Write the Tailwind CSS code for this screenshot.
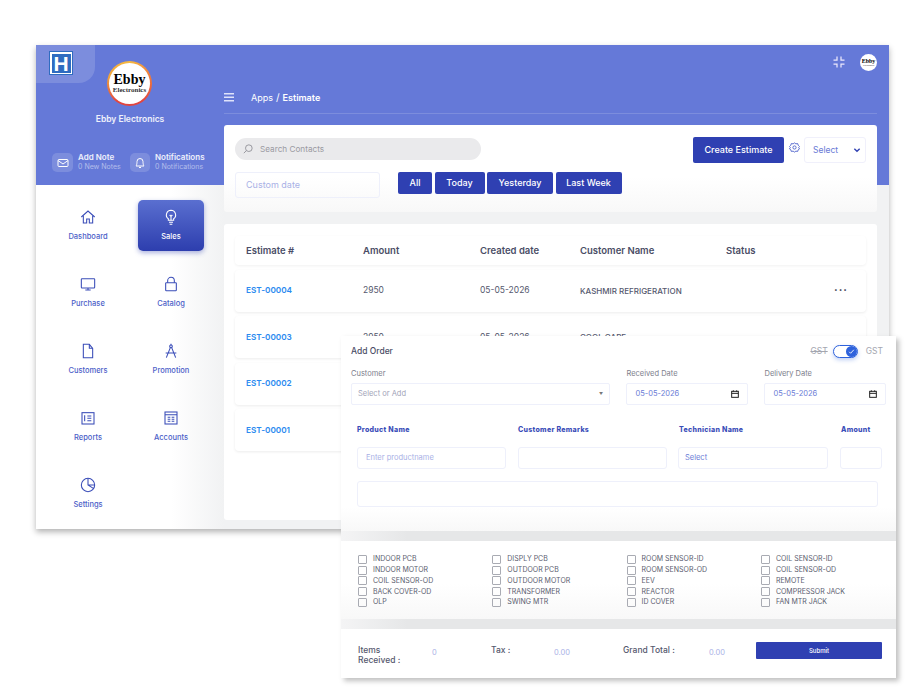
<!DOCTYPE html>
<html lang="en">
<head>
  <meta charset="UTF-8">
  <title>Estimate</title>
  <script src="https://cdn.jsdelivr.net/npm/@tailwindcss/browser@4"></script>
</head>
<body class="bg-white font-['Inter',sans-serif] text-[#3b3f5c]">
<div class="relative w-[920px] h-[700px] overflow-hidden bg-white">

  <!-- main app window -->
  <div class="absolute left-[36px] top-[45px] w-[853px] h-[484px] flex bg-[linear-gradient(#6579d8_140px,#f1f2f3_140px)] shadow-[0_3px_6px_rgba(0,0,0,0.3)]">

    <!-- sidebar -->
    <div class="w-[188px] shrink-0 flex flex-col">
      <div class="relative h-[140px] flex flex-col items-center">
        <div class="absolute left-0 top-0 w-[59px] h-[38px] rounded-br-[16px] bg-white/15 pl-[13px] pt-[6px]">
          <div class="w-[24px] h-[24px] bg-white p-[1.5px] border border-[#2f6cc0]">
            <div class="w-full h-full bg-[#2f6cc0] flex items-center justify-center">
              <span class="text-white font-bold text-[21px] leading-none font-['Liberation_Sans',sans-serif]">H</span>
            </div>
          </div>
        </div>
        <div class="mt-[16px] -ml-[1px] w-[45px] h-[45px] rounded-full bg-[conic-gradient(#f5b942,#ef7a3c,#e2453f,#e2453f,#f2a43a,#f5b942)] p-[2px]">
          <div class="w-full h-full rounded-full bg-white flex flex-col items-center justify-center font-['Liberation_Serif',serif] text-black">
            <span class="text-[14px] font-bold leading-[12px]">Ebby</span>
            <span class="text-[7px] leading-[8px] font-bold text-[#333]">Electronics</span>
          </div>
        </div>
        <div class="mt-[6px] text-[8.500px] font-semibold text-white/90 leading-[14px]">Ebby Electronics</div>
        <div class="mt-[27px] self-start pl-[16px] flex gap-[7px]">
          <div class="flex items-center gap-[5px] w-[71px]">
            <div class="w-[21px] h-[19px] rounded-[5px] bg-white/15 flex items-center justify-center shrink-0">
              <svg class="w-[12px] h-[12px]" viewBox="0 0 24 24" fill="none" stroke="white" stroke-width="2"><rect x="2" y="5" width="20" height="14" rx="2"/><path d="M2 7l10 7 10-7"/></svg>
            </div>
            <div class="leading-[10px] whitespace-nowrap -mt-[2px]">
              <div class="text-[8px] font-semibold text-white/90">Add Note</div>
              <div class="text-[7px] text-white/50">0 New Notes</div>
            </div>
          </div>
          <div class="flex items-center gap-[5px]">
            <div class="w-[20px] h-[19px] rounded-[5px] bg-white/15 flex items-center justify-center shrink-0">
              <svg class="w-[12px] h-[12px]" viewBox="0 0 24 24" fill="none" stroke="white" stroke-width="2"><path d="M18 9a6 6 0 0 0-12 0c0 7-2 9-2 9h16s-2-2-2-9"/><path d="M10 21h4"/></svg>
            </div>
            <div class="leading-[10px] whitespace-nowrap -mt-[2px]">
              <div class="text-[8px] font-semibold text-white/90">Notifications</div>
              <div class="text-[7px] text-white/50">0 Notifications</div>
            </div>
          </div>
        </div>
      </div>

      <div class="flex-1 bg-[linear-gradient(to_right,#ffffff_72%,#f1f2f3)] pt-[15px] pl-[19px]">
        <div class="grid grid-cols-[66px_66px] auto-rows-[51px] gap-x-[17px] gap-y-[16px] text-[7.500px] font-medium text-[#4c60c8] text-center">
          <div class="flex flex-col items-center pt-[9px]">
            <svg class="w-[16px] h-[16px] mb-[6px]" viewBox="0 0 24 24" fill="none" stroke="#3a4db8" stroke-width="1.600"><path d="M2 12L12 3l10 9"/><path d="M5 10v11h5v-6h4v6h5V10"/></svg>
            Dashboard
          </div>
          <div class="flex flex-col items-center pt-[9px] rounded-[5px] bg-[linear-gradient(#5a6fd0,#2d3eae)] text-white shadow-[0_2px_5px_rgba(45,62,174,0.4)]">
            <svg class="w-[16px] h-[16px] mb-[6px]" viewBox="0 0 24 24" fill="none" stroke="white" stroke-width="1.600"><path d="M12 2a7 7 0 0 0-4 12.700V17h8v-2.300A7 7 0 0 0 12 2z"/><path d="M9 20h6M10 23h4M12 17v-6l-2-2M12 11l2-2"/></svg>
            Sales
          </div>
          <div class="flex flex-col items-center pt-[9px]">
            <svg class="w-[16px] h-[16px] mb-[6px]" viewBox="0 0 24 24" fill="none" stroke="#3a4db8" stroke-width="1.600"><rect x="2" y="4" width="20" height="14" rx="1"/><path d="M12 18v3M8 21h8"/></svg>
            Purchase
          </div>
          <div class="flex flex-col items-center pt-[9px]">
            <svg class="w-[16px] h-[16px] mb-[6px]" viewBox="0 0 24 24" fill="none" stroke="#3a4db8" stroke-width="1.600"><rect x="4" y="10" width="16" height="12" rx="1"/><path d="M7 10V7a5 5 0 0 1 10 0v3"/></svg>
            Catalog
          </div>
          <div class="flex flex-col items-center pt-[9px]">
            <svg class="w-[16px] h-[16px] mb-[6px]" viewBox="0 0 24 24" fill="none" stroke="#3a4db8" stroke-width="1.600"><path d="M5 2h9l5 6v14H5z"/><path d="M14 2v6h5"/></svg>
            Customers
          </div>
          <div class="flex flex-col items-center pt-[9px]">
            <svg class="w-[16px] h-[16px] mb-[6px]" viewBox="0 0 24 24" fill="none" stroke="#3a4db8" stroke-width="1.600"><circle cx="12" cy="5" r="2"/><path d="M11 7L5 22M13 7l6 15M4 15h16M12 1v2"/></svg>
            Promotion
          </div>
          <div class="flex flex-col items-center pt-[9px]">
            <svg class="w-[16px] h-[16px] mb-[6px]" viewBox="0 0 24 24" fill="none" stroke="#3a4db8" stroke-width="1.600"><rect x="3" y="4" width="18" height="17"/><path d="M7 8v9M11 9h6M11 12.500h6M11 16h6"/></svg>
            Reports
          </div>
          <div class="flex flex-col items-center pt-[9px]">
            <svg class="w-[16px] h-[16px] mb-[6px]" viewBox="0 0 24 24" fill="none" stroke="#3a4db8" stroke-width="1.600"><rect x="3" y="3" width="18" height="18"/><path d="M3 7h18M7 11h4M13 11h4M7 14h4M13 14h4M7 17h4M13 17h4"/></svg>
            Accounts
          </div>
          <div class="flex flex-col items-center pt-[9px]">
            <svg class="w-[16px] h-[16px] mb-[6px]" viewBox="0 0 24 24" fill="none" stroke="#3a4db8" stroke-width="1.600"><circle cx="12" cy="12" r="10"/><path d="M12 2v10l8 5M12 12h10"/></svg>
            Settings
          </div>
        </div>
      </div>
    </div>

    <!-- content -->
    <div class="w-[653px] flex flex-col">
      <div class="h-[37px] flex justify-end items-start pt-[9px] gap-[15px]">
        <svg class="w-[12px] h-[12px] mt-[2px]" viewBox="0 0 24 24" fill="none" stroke="#ece8fb" stroke-width="2.500"><path d="M1 8h7V1M23 8h-7V1M1 16h7v7M23 16h-7v7"/></svg>
        <div class="w-[17px] h-[17px] rounded-full bg-white flex flex-col items-center justify-center font-['Liberation_Serif',serif] text-black">
          <span class="text-[6px] font-bold leading-[5px]">Ebby</span>
          <span class="text-[2.500px] leading-[3px]">Electronics</span>
        </div>
      </div>
      <div class="h-[32px] flex items-center border-b border-white/15 text-[9px] text-white">
        <svg class="w-[11px] h-[9px]" viewBox="0 0 11 9" fill="#dfe3fa"><rect y="0" width="10" height="1.500"/><rect y="3.500" width="10" height="1.500"/><rect y="7" width="10" height="1.500"/></svg>
        <span class="ml-[16px]">Apps</span><span class="mx-[3px] text-[10px]">/</span><span class="font-semibold">Estimate</span>
      </div>

      <!-- filter card -->
      <div class="mt-[11px] h-[87px] bg-[linear-gradient(#ffffff_60%,#f8f8f8)] rounded-[3px] px-[11px] pt-[12px]">
        <div class="flex items-start">
          <div class="w-[246px] h-[22px] mt-[1px] rounded-full bg-[#eaeaec] flex items-center pl-[8px] gap-[7px]">
            <svg class="w-[10px] h-[10px]" viewBox="0 0 24 24" fill="none" stroke="#8a8a92" stroke-width="2"><circle cx="14" cy="10" r="8"/><path d="M8 16l-6 6"/></svg>
            <span class="text-[8.200px] text-[#9a9aa2]">Search Contacts</span>
          </div>
          <div class="ml-auto w-[91px] h-[26px] rounded-[2px] bg-[#2f40b2] text-white text-[9px] font-medium flex items-center justify-center">Create Estimate</div>
          <svg class="w-[11px] h-[11px] ml-[5px] mt-[5px]" viewBox="0 0 24 24" fill="none" stroke="#4f63cc" stroke-width="2"><circle cx="12" cy="12" r="3.500"/><path d="M12 2l3 2 4-.5 1 3.500 3 3-2 2 2 3-3 2-1 3.500-4-.5-3 2-3-2-4 .5-1-3.500-3-2 2-3-2-2 3-3 1-3.500 4 .5z"/></svg>
          <div class="ml-[4px] w-[62px] h-[26px] rounded-[3px] border border-[#f0f0fb] flex items-center justify-between pl-[8px] pr-[4px] text-[8.500px] text-[#6a7bd6]">
            Select
            <svg class="w-[8px] h-[8px]" viewBox="0 0 24 24" fill="none" stroke="#2f40b2" stroke-width="4"><path d="M4 8l8 8 8-8"/></svg>
          </div>
        </div>
        <div class="flex mt-[9px]">
          <div class="w-[145px] h-[26px] rounded-[3px] border border-[#eef0fb] flex items-center pl-[10px] text-[9px] text-[#a9b1e6]">Custom date</div>
          <div class="ml-[18px] flex gap-[2.500px] text-[9px] font-medium text-white">
            <div class="w-[34px] h-[22px] rounded-[2px] bg-[#2f40b2] flex items-center justify-center">All</div>
            <div class="w-[50px] h-[22px] rounded-[2px] bg-[#2f40b2] flex items-center justify-center">Today</div>
            <div class="w-[66px] h-[22px] rounded-[2px] bg-[#2f40b2] flex items-center justify-center">Yesterday</div>
            <div class="w-[66px] h-[22px] rounded-[2px] bg-[#2f40b2] flex items-center justify-center">Last Week</div>
          </div>
        </div>
      </div>

      <!-- table card -->
      <div class="mt-[12px] h-[296px] bg-white rounded-[3px] px-[11px] pt-[12px] flex flex-col gap-[4.500px]">
        <div class="grid grid-cols-[117px_117px_100px_146px_1fr] items-center h-[29px] pl-[11px] pt-[2px] rounded-[4px] shadow-[0_1px_3px_rgba(0,0,0,0.06)] text-[9.500px] font-semibold text-[#4a4d66]">
          <div>Estimate #</div><div>Amount</div><div>Created date</div><div>Customer Name</div><div>Status</div>
        </div>
        <div class="grid grid-cols-[117px_117px_100px_146px_1fr] items-center h-[42px] pl-[11px] rounded-[4px] shadow-[0_1px_3px_rgba(0,0,0,0.08)] text-[8.500px] text-[#55586e]">
          <div class="font-semibold text-[8.200px] text-[#2b8af0]">EST-00004</div><div>2950</div><div>05-05-2026</div><div class="font-medium text-[8px]">KASHMIR REFRIGERATION</div>
          <div class="text-right pr-[18px] text-[#33364d] font-bold tracking-[1px] text-[11px]">···</div>
        </div>
        <div class="grid grid-cols-[117px_117px_100px_146px_1fr] items-center h-[42px] pl-[11px] rounded-[4px] shadow-[0_1px_3px_rgba(0,0,0,0.08)] text-[8.500px] text-[#55586e]">
          <div class="font-semibold text-[8.200px] text-[#2b8af0]">EST-00003</div><div>2950</div><div>05-05-2026</div><div class="font-medium text-[8px]">COOL CARE</div>
          <div class="text-right pr-[18px] text-[#33364d] font-bold tracking-[1px] text-[11px]">···</div>
        </div>
        <div class="grid grid-cols-[117px_1fr] items-center h-[42px] pl-[11px] rounded-[4px] shadow-[0_1px_3px_rgba(0,0,0,0.08)]">
          <div class="font-semibold text-[8.200px] text-[#2b8af0]">EST-00002</div>
        </div>
        <div class="grid grid-cols-[117px_1fr] items-center h-[42px] pl-[11px] rounded-[4px] shadow-[0_1px_3px_rgba(0,0,0,0.08)]">
          <div class="font-semibold text-[8.200px] text-[#2b8af0]">EST-00001</div>
        </div>
      </div>
    </div>
  </div>

  <!-- add order window -->
  <div class="absolute left-[341px] top-[336px] w-[555px] h-[342px] flex flex-col bg-white shadow-[3px_3px_5px_rgba(0,0,0,0.25)]">
    <div class="h-[195px] px-[10px] bg-[linear-gradient(#ffffff_88%,#f8f8f8)]">
      <div class="flex items-center justify-between h-[30px]">
        <span class="text-[8.500px] font-medium text-[#4a4d66]">Add Order</span>
        <div class="flex items-center text-[8.500px] text-[#a4a6b0] pr-[3px]">
          <span class="line-through">GST</span>
          <div class="ml-[5px] mr-[8px] w-[25px] h-[13px] rounded-full border border-[#2e62dc] bg-white flex items-center justify-end shadow-[0_2px_4px_rgba(46,98,220,0.3)]">
            <div class="w-[11px] h-[11px] rounded-full bg-[#2e62dc] flex items-center justify-center">
              <svg class="w-[7px] h-[7px]" viewBox="0 0 24 24" fill="none" stroke="white" stroke-width="3"><path d="M4 13l5 5L20 6"/></svg>
            </div>
          </div>
          <span>GST</span>
        </div>
      </div>
      <div class="flex gap-[16.500px] text-[7.500px] text-[#7c7e8c]">
        <div class="w-[260px]">
          <div class="h-[17px] pt-[2px]">Customer</div>
          <div class="h-[22px] rounded-[2px] border border-[#eef0fb] flex items-center justify-between pl-[6px] pr-[6px] text-[#a2a4b8]">
            Select or Add
            <span class="text-[4px] text-[#777]">▼</span>
          </div>
        </div>
        <div class="w-[122px]">
          <div class="h-[17px] pt-[2px]">Received Date</div>
          <div class="h-[22px] rounded-[2px] border border-[#eef0fb] flex items-center justify-between pl-[8px] pr-[8px] text-[#6a7bd6]">
            05-05-2026
            <svg class="w-[8px] h-[8px]" viewBox="0 0 24 24" fill="none" stroke="#222" stroke-width="3"><rect x="2" y="4" width="20" height="18"/><path d="M2 10h20M7 1v4M17 1v4"/></svg>
          </div>
        </div>
        <div class="w-[122px]">
          <div class="h-[17px] pt-[2px]">Delivery Date</div>
          <div class="h-[22px] rounded-[2px] border border-[#eef0fb] flex items-center justify-between pl-[8px] pr-[8px] text-[#6a7bd6]">
            05-05-2026
            <svg class="w-[8px] h-[8px]" viewBox="0 0 24 24" fill="none" stroke="#222" stroke-width="3"><rect x="2" y="4" width="20" height="18"/><path d="M2 10h20M7 1v4M17 1v4"/></svg>
          </div>
        </div>
      </div>
      <div class="pl-[6px] grid grid-cols-[149px_149px_150px_42px] gap-x-[12px] mt-[20px] text-[7px] font-extrabold tracking-[0.3px] text-[#3a4db8]">
        <div>Product Name</div><div>Customer Remarks</div><div>Technician Name</div><div>Amount</div>
      </div>
      <div class="pl-[6px] grid grid-cols-[149px_149px_150px_42px] gap-x-[11.500px] mt-[11px] text-[7.500px] text-[#a9b1e6]">
        <div class="h-[22px] rounded-[3px] border border-[#eef0fb] flex items-center pl-[8px]">Enter productname</div>
        <div class="h-[22px] rounded-[3px] border border-[#eef0fb]"></div>
        <div class="h-[22px] rounded-[3px] border border-[#eef0fb] flex items-center pl-[6px] text-[#6a7bd6]">Select</div>
        <div class="h-[22px] rounded-[3px] border border-[#eef0fb]"></div>
      </div>
      <div class="ml-[6px] mt-[12px] w-[521px] h-[26px] rounded-[3px] border border-[#eef0fb]"></div>
    </div>

    <div class="h-[10px] bg-[linear-gradient(to_right,#f4f4f5,#e6e7e8_12%)]"></div>

    <div class="h-[78px] pl-[17px] pt-[13px] bg-[linear-gradient(#ffffff_55%,#f8f8f8)] grid grid-cols-[134.300px_134.300px_134.300px_1fr] auto-rows-[10.800px] text-[7px] text-[#5a5c6e]">
      <label class="flex items-center gap-[6px]"><input type="checkbox" class="appearance-none w-[9px] h-[9px] border border-[#a9abb3] rounded-[1px]">INDOOR PCB</label>
      <label class="flex items-center gap-[6px]"><input type="checkbox" class="appearance-none w-[9px] h-[9px] border border-[#a9abb3] rounded-[1px]">DISPLY PCB</label>
      <label class="flex items-center gap-[6px]"><input type="checkbox" class="appearance-none w-[9px] h-[9px] border border-[#a9abb3] rounded-[1px]">ROOM SENSOR-ID</label>
      <label class="flex items-center gap-[6px]"><input type="checkbox" class="appearance-none w-[9px] h-[9px] border border-[#a9abb3] rounded-[1px]">COIL SENSOR-ID</label>
      <label class="flex items-center gap-[6px]"><input type="checkbox" class="appearance-none w-[9px] h-[9px] border border-[#a9abb3] rounded-[1px]">INDOOR MOTOR</label>
      <label class="flex items-center gap-[6px]"><input type="checkbox" class="appearance-none w-[9px] h-[9px] border border-[#a9abb3] rounded-[1px]">OUTDOOR PCB</label>
      <label class="flex items-center gap-[6px]"><input type="checkbox" class="appearance-none w-[9px] h-[9px] border border-[#a9abb3] rounded-[1px]">ROOM SENSOR-OD</label>
      <label class="flex items-center gap-[6px]"><input type="checkbox" class="appearance-none w-[9px] h-[9px] border border-[#a9abb3] rounded-[1px]">COIL SENSOR-OD</label>
      <label class="flex items-center gap-[6px]"><input type="checkbox" class="appearance-none w-[9px] h-[9px] border border-[#a9abb3] rounded-[1px]">COIL SENSOR-OD</label>
      <label class="flex items-center gap-[6px]"><input type="checkbox" class="appearance-none w-[9px] h-[9px] border border-[#a9abb3] rounded-[1px]">OUTDOOR MOTOR</label>
      <label class="flex items-center gap-[6px]"><input type="checkbox" class="appearance-none w-[9px] h-[9px] border border-[#a9abb3] rounded-[1px]">EEV</label>
      <label class="flex items-center gap-[6px]"><input type="checkbox" class="appearance-none w-[9px] h-[9px] border border-[#a9abb3] rounded-[1px]">REMOTE</label>
      <label class="flex items-center gap-[6px]"><input type="checkbox" class="appearance-none w-[9px] h-[9px] border border-[#a9abb3] rounded-[1px]">BACK COVER-OD</label>
      <label class="flex items-center gap-[6px]"><input type="checkbox" class="appearance-none w-[9px] h-[9px] border border-[#a9abb3] rounded-[1px]">TRANSFORMER</label>
      <label class="flex items-center gap-[6px]"><input type="checkbox" class="appearance-none w-[9px] h-[9px] border border-[#a9abb3] rounded-[1px]">REACTOR</label>
      <label class="flex items-center gap-[6px]"><input type="checkbox" class="appearance-none w-[9px] h-[9px] border border-[#a9abb3] rounded-[1px]">COMPRESSOR JACK</label>
      <label class="flex items-center gap-[6px]"><input type="checkbox" class="appearance-none w-[9px] h-[9px] border border-[#a9abb3] rounded-[1px]">OLP</label>
      <label class="flex items-center gap-[6px]"><input type="checkbox" class="appearance-none w-[9px] h-[9px] border border-[#a9abb3] rounded-[1px]">SWING MTR</label>
      <label class="flex items-center gap-[6px]"><input type="checkbox" class="appearance-none w-[9px] h-[9px] border border-[#a9abb3] rounded-[1px]">ID COVER</label>
      <label class="flex items-center gap-[6px]"><input type="checkbox" class="appearance-none w-[9px] h-[9px] border border-[#a9abb3] rounded-[1px]">FAN MTR JACK</label>
    </div>

    <div class="h-[10px] bg-[linear-gradient(to_right,#f4f4f5,#e6e7e8_12%)]"></div>

    <div class="flex-1 pl-[17px] pt-[13px] flex items-start text-[8.500px] font-medium text-[#55586e]">
      <div class="w-[74px] leading-[10px] pt-[3px]">Items<br>Received :</div>
      <div class="w-[59px] pt-[5px] text-[7.500px] font-normal text-[#a9b1e6]">0</div>
      <div class="w-[63px] pt-[3px] leading-[10px]">Tax :</div>
      <div class="w-[69px] pt-[5px] text-[7.500px] font-normal text-[#a9b1e6]">0.00</div>
      <div class="w-[86px] pt-[3px] leading-[10px]">Grand Total :</div>
      <div class="w-[47px] pt-[5px] text-[7.500px] font-normal text-[#a9b1e6]">0.00</div>
      <div class="w-[126px] h-[17px] rounded-[1px] bg-[#2f40b2] text-white text-[6px] flex items-center justify-center">Submit</div>
    </div>
  </div>
</div>
</body>
</html>
